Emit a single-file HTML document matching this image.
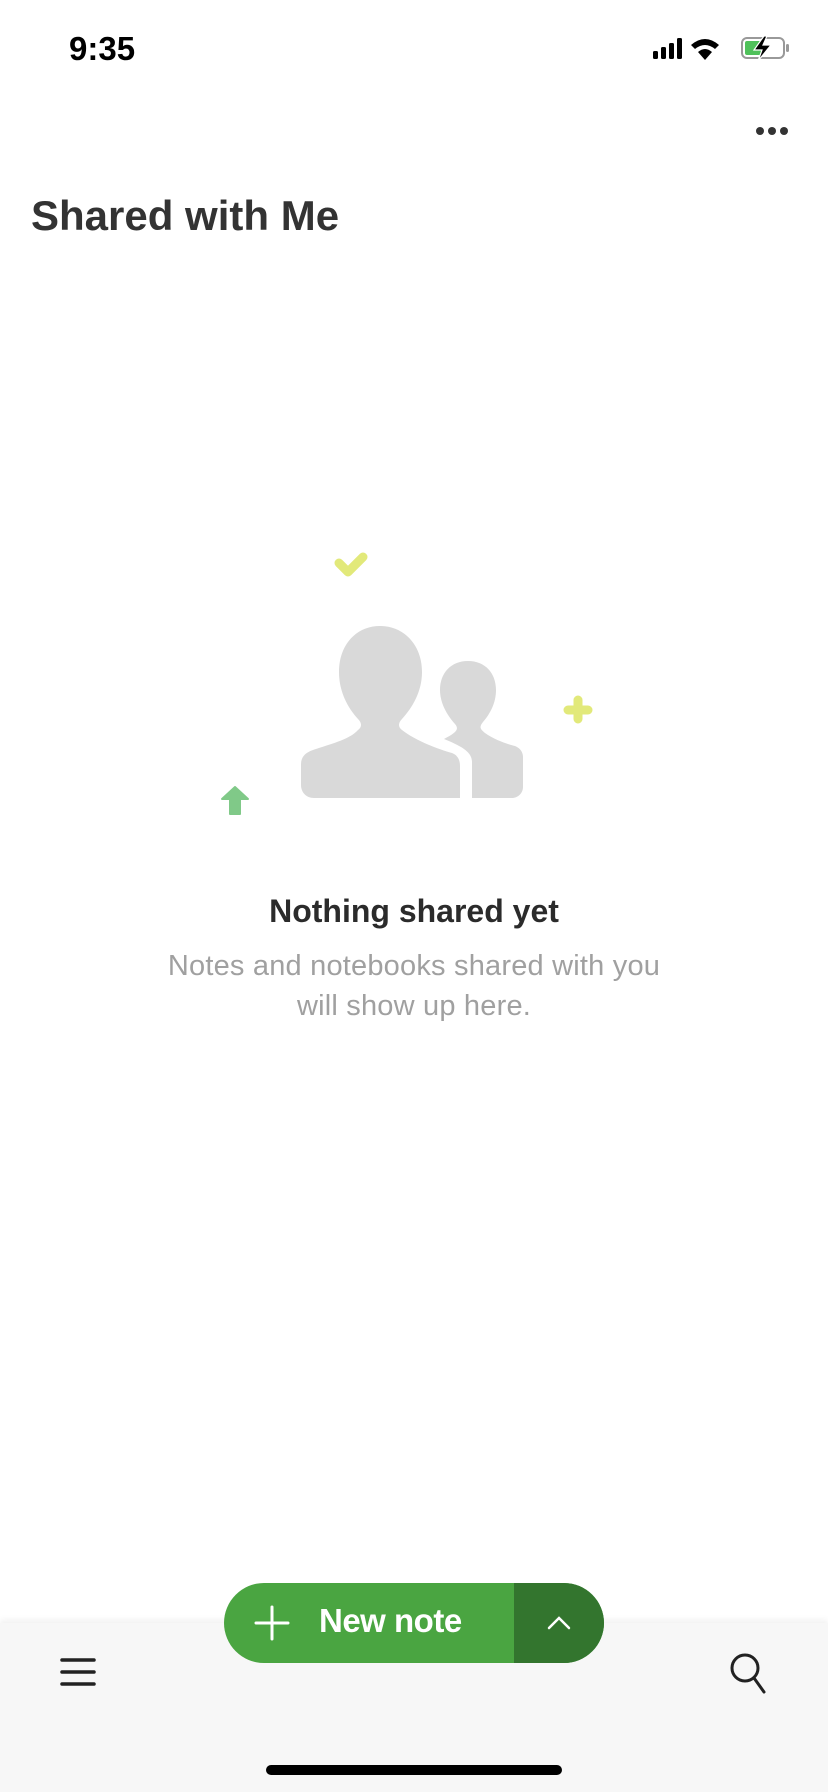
<!DOCTYPE html>
<html><head><meta charset="utf-8"><style>
html,body{margin:0;padding:0}
body{width:828px;height:1792px;position:relative;background:#fff;font-family:"Liberation Sans",sans-serif;overflow:hidden}
.a{position:absolute}
</style></head><body>
<div class="a" style="left:69px;top:30px;font-size:33px;font-weight:bold;color:#000">9:35</div>
<svg class="a" style="left:650px;top:34px" width="145" height="30" viewBox="0 0 145 30">
<rect x="3" y="17" width="5" height="8" rx="1.5" fill="#000"/>
<rect x="11" y="13" width="5" height="12" rx="1.5" fill="#000"/>
<rect x="19" y="9" width="5" height="16" rx="1.5" fill="#000"/>
<rect x="27" y="4" width="5" height="21" rx="1.5" fill="#000"/>
<path d="M41 11 Q55 -1 69 11 L65 15 Q55 7 45 15Z M48 18 Q55 12 62 18 L55 26Z" fill="#000"/>
<rect x="92" y="4" width="42" height="20" rx="5" fill="none" stroke="#999" stroke-width="2"/>
<rect x="95" y="7" width="17" height="14" rx="2" fill="#4fc15a"/>
<rect x="136" y="10" width="3" height="8" rx="1.5" fill="#999"/>
<path d="M114 2 L104 16 H112 L108 27 L121 11 H113 L117 2Z" fill="#000" stroke="#fff" stroke-width="1.2"/>
</svg>
<svg class="a" style="left:754px;top:124px" width="36" height="14"><circle cx="6" cy="7" r="4" fill="#333"/><circle cx="18" cy="7" r="4" fill="#333"/><circle cx="30" cy="7" r="4" fill="#333"/></svg>
<div class="a" style="left:31px;top:192px;font-size:42px;font-weight:bold;color:#333">Shared with Me</div>

<svg class="a" style="left:0;top:0" width="828" height="900" viewBox="0 0 828 900">
<path d="M339 563 L348 572 L363 557" fill="none" stroke="#e2e97a" stroke-width="9" stroke-linecap="round" stroke-linejoin="round"/>
<path d="M578 700 V719 M568 710 H588" stroke="#e2e97a" stroke-width="9" stroke-linecap="round"/>
<path d="M235 787 L222 799 H230 V814 H240 V799 H248Z" fill="#80c988" stroke="#80c988" stroke-width="2" stroke-linejoin="round"/>
<path d="M380 626 C404 626 422 645 422 672 C422 692 412 708 402 719 C398 723 398 727 402 730 C416 741 438 749 452 753 C457 755 460 759 460 766 V798 H314 C306 798 301 792 301 785 V765 C301 756 306 752 316 749 C334 743 350 739 358 730 C362 727 362 723 358 719 C348 708 339 692 339 672 C339 645 356 626 380 626Z" fill="#d9d9d9"/>
<path d="M472 798 V762 C472 753 464 747 444 739 C455 733 460 730 455 724 C447 715 440 703 440 690 C440 673 451 661 468 661 C485 661 496 673 496 690 C496 703 490 714 483 722 C479 727 480 729 485 733 C495 740 507 744 515 746 C520 748 523 752 523 757 V787 C523 793 518 798 512 798Z" fill="#d9d9d9"/>
</svg>

<div class="a" style="left:0;width:828px;top:893px;text-align:center;font-size:32px;font-weight:bold;color:#2b2b2b">Nothing shared yet</div>
<div class="a" style="left:0;width:828px;top:946px;text-align:center;font-size:29px;line-height:40px;color:#a0a0a0;letter-spacing:0.2px">Notes and notebooks shared with you<br>will show up here.</div>

<div class="a" style="left:0;top:1623px;width:828px;height:169px;background:#f7f7f7;box-shadow:0 -3px 6px rgba(0,0,0,0.06)"></div>
<svg class="a" style="left:60px;top:1655px" width="40" height="36"><path d="M2 5H34M2 17H34M2 29H34" stroke="#222" stroke-width="3.5" stroke-linecap="round"/></svg>
<svg class="a" style="left:726px;top:1649px" width="50" height="50"><circle cx="19" cy="19" r="13" fill="none" stroke="#222" stroke-width="3"/><path d="M28 29L38 43" stroke="#222" stroke-width="3" stroke-linecap="round"/></svg>
<div class="a" style="left:224px;top:1583px;width:380px;height:80px;border-radius:40px;background:#4aa541;overflow:hidden">
<div class="a" style="left:290px;top:0;width:90px;height:80px;background:#33752e"></div>
<svg class="a" style="left:30px;top:22px" width="36" height="36"><path d="M18 2V34M2 18H34" stroke="#fff" stroke-width="3" stroke-linecap="round"/></svg>
<div class="a" style="left:95px;top:19px;font-size:33px;color:#fff;font-weight:bold;letter-spacing:-0.5px">New note</div>
<svg class="a" style="left:320px;top:28px" width="30" height="24"><path d="M5 17L15 7L25 17" fill="none" stroke="#fff" stroke-width="2.5" stroke-linecap="round"/></svg>
</div>
<div class="a" style="left:266px;top:1765px;width:296px;height:10px;border-radius:5px;background:#000"></div>
</body></html>
